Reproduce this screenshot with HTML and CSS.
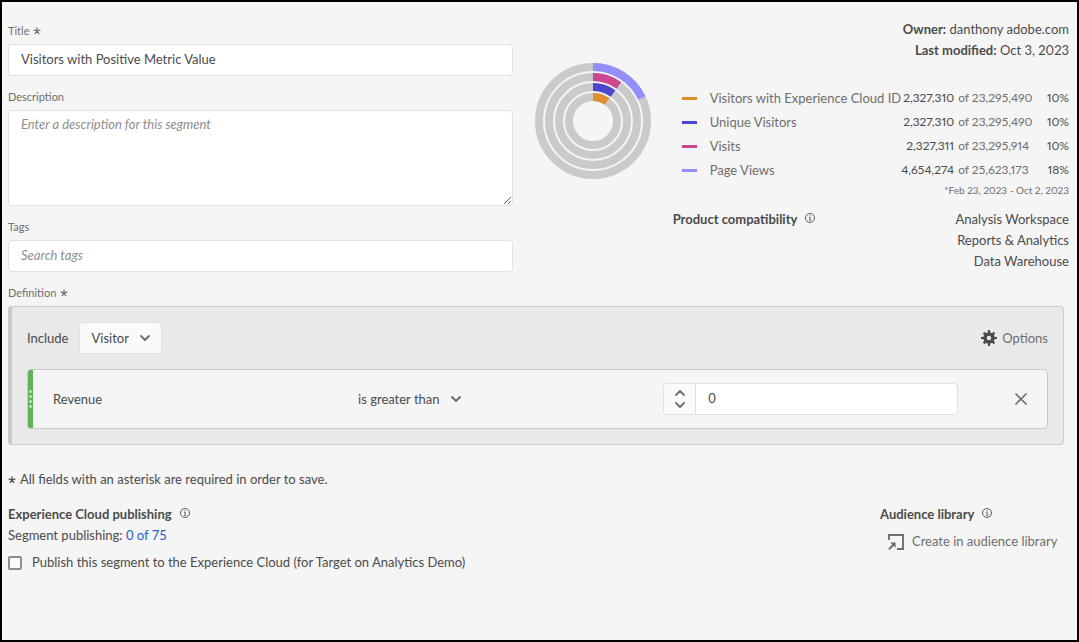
FILE: index.html
```html
<!DOCTYPE html>
<html lang="en">
<head>
<meta charset="utf-8">
<meta name="viewport" content="width=device-width, initial-scale=1">
<title>Segment builder</title>
<link rel="stylesheet" href="styles.css">
</head>
<body>
<svg class="sprite" aria-hidden="true">
  <symbol id="asterisk" viewBox="0 0 8 8"><path d="M4 4V.4M4 4 .6 2.9M4 4l3.4-1.1M4 4 1.9 7M4 4l2.1 3" fill="none" stroke="currentColor" stroke-width="1.3"/></symbol>
  <symbol id="info" viewBox="0 0 10 10"><circle cx="5" cy="5" r="4.5" fill="none" stroke="currentColor" stroke-width=".9"/><path d="M4 4.4h1.2v2.8M3.9 7.3h2.4" fill="none" stroke="currentColor" stroke-width=".8"/><circle cx="5" cy="2.8" r=".65" fill="currentColor"/></symbol>
  <symbol id="chevron" viewBox="0 0 10 6"><path d="M1 1l4 4 4-4" fill="none" stroke="currentColor" stroke-width="1.8" stroke-linecap="round" stroke-linejoin="round"/></symbol>
</svg>
<main class="page">
  <div class="top">
    <form class="details">
      <label class="label" for="title">Title <svg class="asterisk"><use href="#asterisk"/></svg></label>
      <input class="field" id="title" type="text" value="Visitors with Positive Metric Value">
      <label class="label label-next" for="description">Description</label>
      <textarea class="field field-area" id="description" placeholder="Enter a description for this segment"></textarea>
      <label class="label label-next" for="tags">Tags</label>
      <input class="field" id="tags" type="text" placeholder="Search tags">
    </form>
    <section class="summary">
      <div class="meta">
        <div><b>Owner:</b> danthony adobe.com</div>
        <div><b>Last modified:</b> Oct 3, 2023</div>
      </div>
      <div class="stats">
        <svg class="chart" viewBox="0 0 116 116" role="img" aria-label="Share of each metric">
          <g fill="none" stroke="#cacaca" stroke-width="8">
            <circle cx="58" cy="58" r="54"/><circle cx="58" cy="58" r="44"/><circle cx="58" cy="58" r="34"/><circle cx="58" cy="58" r="24"/>
          </g>
          <g fill="none" stroke-width="8" transform="rotate(-90 58 58)">
            <circle cx="58" cy="58" r="54" pathLength="100" stroke="#938ffa" stroke-dasharray="18 82"/>
            <circle cx="58" cy="58" r="44" pathLength="100" stroke="#cb4790" stroke-dasharray="10 90"/>
            <circle cx="58" cy="58" r="34" pathLength="100" stroke="#4c46d1" stroke-dasharray="10 90"/>
            <circle cx="58" cy="58" r="24" pathLength="100" stroke="#de8d2f" stroke-dasharray="10 90"/>
          </g>
        </svg>
        <div class="figures">
          <table class="legend">
            <tr><td class="key"><span class="swatch orange"></span></td><th scope="row">Visitors with Experience Cloud ID</th><td class="value">2,327,310</td><td class="total">of 23,295,490</td><td class="percent">10%</td></tr>
            <tr><td class="key"><span class="swatch indigo"></span></td><th scope="row">Unique Visitors</th><td class="value">2,327,310</td><td class="total">of 23,295,490</td><td class="percent">10%</td></tr>
            <tr><td class="key"><span class="swatch magenta"></span></td><th scope="row">Visits</th><td class="value">2,327,311</td><td class="total">of 23,295,914</td><td class="percent">10%</td></tr>
            <tr><td class="key"><span class="swatch violet"></span></td><th scope="row">Page Views</th><td class="value">4,654,274</td><td class="total">of 25,623,173</td><td class="percent">18%</td></tr>
          </table>
          <p class="range">*Feb 23, 2023 - Oct 2, 2023</p>
          <div class="products">
            <h2 class="heading">Product compatibility <svg class="info"><use href="#info"/></svg></h2>
            <ul class="product-list"><li>Analysis Workspace</li><li>Reports &amp; Analytics</li><li>Data Warehouse</li></ul>
          </div>
        </div>
      </div>
    </section>
  </div>

  <div class="label label-next">Definition <svg class="asterisk"><use href="#asterisk"/></svg></div>
  <section class="definition">
    <div class="scope">
      <label for="scope">Include</label>
      <span class="picker picker-boxed"><select id="scope"><option>Visitor</option></select><svg class="chevron"><use href="#chevron"/></svg></span>
      <button class="action options" type="button">
        <svg class="icon" viewBox="0 0 16 16"><circle cx="8" cy="8" r="4" fill="none" stroke="currentColor" stroke-width="3.6"/><path d="M8 0v3M8 13v3M0 8h3M13 8h3M2.6 2.6l2 2M11.4 11.4l2 2M2.6 13.4l2-2M11.4 4.6l2-2" stroke="currentColor" stroke-width="2.2"/></svg>
        Options</button>
    </div>
    <div class="rule">
      <span class="grip"><i></i><i></i><i></i><i></i></span>
      <label for="amount">Revenue</label>
      <span class="picker"><select aria-label="Operator"><option>is greater than</option></select><svg class="chevron"><use href="#chevron"/></svg></span>
      <div class="stepper">
        <div class="steps">
          <button type="button" aria-label="Increase"><svg class="step up"><use href="#chevron"/></svg></button>
          <button type="button" aria-label="Decrease"><svg class="step"><use href="#chevron"/></svg></button>
        </div>
        <input id="amount" type="number" value="0">
      </div>
      <button class="remove" type="button" aria-label="Remove rule"><svg viewBox="0 0 12 12"><path d="M1 1l10 10M11 1L1 11" stroke="currentColor" stroke-width="1.7" stroke-linecap="round"/></svg></button>
    </div>
  </section>

  <p class="note"><svg class="asterisk"><use href="#asterisk"/></svg> All fields with an asterisk are required in order to save.</p>

  <div class="bottom">
    <section>
      <h2 class="heading">Experience Cloud publishing <svg class="info"><use href="#info"/></svg></h2>
      <p class="quota">Segment publishing: <a href="#quota">0 of 75</a></p>
      <label class="publish"><input type="checkbox"> Publish this segment to the Experience Cloud (for Target on Analytics Demo)</label>
    </section>
    <section class="audience">
      <h2 class="heading">Audience library <svg class="info"><use href="#info"/></svg></h2>
      <button class="action create" type="button">
        <svg class="icon" viewBox="0 0 16 16"><path d="M1 6V1h14v14H9" fill="none" stroke="currentColor" stroke-width="1.9"/><path d="M2.2 8.6h5.4v5.2L5.8 12 1.4 16 .2 14.8 4.2 10.5z" fill="currentColor"/></svg>
        Create in audience library</button>
    </section>
  </div>
</main>
</body>
</html>
```
FILE: styles.css
```css
* { box-sizing: border-box; }

body {
  margin: 0;
  background: #f5f5f5;
  color: #4b4b4b;
  font: 13px/21px Lato, "Noto Sans", sans-serif;
}

input, textarea, select, button { font: inherit; color: inherit; }
button { padding: 0; border: 0; background: none; }
h2, p, ul { margin: 0; padding: 0; }

.sprite { position: absolute; width: 0; height: 0; }

.page {
  min-height: 100vh;
  border: 2px solid #000;
  padding: 17px 8px 24px 6px;
}

.top {
  display: grid;
  grid-template-columns: 17fr 18fr;
  gap: 22px;
}

.details { display: flex; flex-direction: column; padding-top: 1px; }

.label {
  display: flex;
  align-items: center;
  gap: 4px;
  padding-bottom: 2px;
  font-size: 11px;
  line-height: 22px;
  color: #6e6e6e;
}
.label-next { margin-top: 10px; }
.asterisk { width: 8px; height: 8px; }

.field {
  width: 100%;
  height: 32px;
  padding: 0 12px 2px;
  border: 1px solid #e1e1e1;
  border-radius: 4px;
  background: #fff;
}
.field-area { display: block; height: 96px; padding: 3px 12px; }
.field::placeholder { color: #8e8e8e; font-style: italic; opacity: 1; }

.meta { text-align: right; font-variant-numeric: proportional-nums; }
.stats { display: flex; gap: 22px; }
.chart { flex: none; width: 116px; height: 116px; margin-top: 2px; }
.figures { flex: 1; min-width: 0; padding-top: 25px; }

.legend {
  width: 100%;
  border-collapse: collapse;
  line-height: 24px;
  white-space: nowrap;
  font-variant-numeric: proportional-nums;
}
.legend td, .legend th { padding: 0; font-weight: 400; text-align: left; }
.legend th { color: #6e6e6e; }
.legend .key { width: 37px; min-width: 37px; padding-left: 9px; }
.swatch { display: block; width: 15px; height: 3px; }
.orange { background: #de8d2f; }
.indigo { background: #4c46d1; }
.magenta { background: #cb4790; }
.violet { background: #938ffa; }
.legend .value, .legend .total, .legend .percent { font-size: 12px; }
.legend .value { text-align: right; }
.legend .total { width: 84px; padding-left: 4px; color: #6e6e6e; }
.legend .percent { width: 33px; text-align: right; }

.range { font-size: 10px; line-height: 16px; text-align: right; color: #6e6e6e; font-variant-numeric: proportional-nums; }
.products { display: flex; justify-content: space-between; margin-top: 11px; }
.product-list { list-style: none; text-align: right; }

.heading { display: flex; gap: 8px; font-size: 13px; line-height: 21px; }
.info { width: 10px; height: 10px; margin-top: 4px; }

.definition {
  margin-right: 5px;
  padding: 15px;
  border: 1px solid #cacaca;
  border-left-width: 4px;
  border-radius: 4px;
  background: #e9e9e9;
}
.scope { display: flex; align-items: center; gap: 11px; }

.picker { display: inline-flex; position: relative; align-items: center; justify-self: start; }
.picker select {
  height: 32px;
  padding: 0 21px 0 0;
  border: 0;
  background: none;
  appearance: none;
}
.picker .chevron { position: absolute; right: 0; pointer-events: none; }
.picker-boxed select {
  padding: 0 32px 0 11px;
  border: 1px solid #e1e1e1;
  border-radius: 4px;
  background: #fafafa;
}
.picker-boxed .chevron { right: 12px; }
.chevron { width: 10px; height: 6px; color: #6e6e6e; }

.action { display: inline-flex; align-items: center; }
.icon { width: 16px; height: 16px; }
.options { gap: 5px; margin-left: auto; color: #6e6e6e; }
.options .icon { color: #4b4b4b; }

.rule {
  display: grid;
  grid-template-columns: 31fr 31fr 30fr 9fr;
  align-items: center;
  position: relative;
  height: 60px;
  margin-top: 15px;
  padding-left: 25px;
  border: 1px solid #cacaca;
  border-radius: 4px;
  background: #f5f5f5;
}
.grip {
  display: flex;
  flex-direction: column;
  align-items: center;
  justify-content: center;
  gap: 2px;
  position: absolute;
  inset: 0 auto 0 0;
  width: 5px;
  border-radius: 2px 0 0 2px;
  background: #62b25a;
}
.grip i { width: 3px; height: 3px; border-radius: 50%; background: #c4e4c0; }

.stepper {
  display: flex;
  height: 32px;
  border: 1px solid #e1e1e1;
  border-radius: 4px;
  background: #fff;
  overflow: hidden;
}
.steps {
  display: flex;
  flex-direction: column;
  flex: none;
  width: 32px;
  padding: 3px 0;
  border-right: 1px solid #e1e1e1;
  background: #fafafa;
}
.steps button { display: flex; flex: 1; align-items: center; justify-content: center; }
.step { width: 10px; height: 6px; color: #6e6e6e; }
.up { transform: rotate(180deg); }
.stepper input { flex: 1; min-width: 0; padding: 0 12px 2px; border: 0; background: none; appearance: textfield; }
.stepper input::-webkit-inner-spin-button { appearance: none; margin: 0; }

.remove { display: flex; justify-self: end; margin-right: 20px; color: #6e6e6e; }
.remove svg { width: 12px; height: 12px; }

.note { display: flex; align-items: center; gap: 4px; margin-top: 24px; }
.bottom { display: flex; justify-content: space-between; margin-top: 14px; }
.quota a { color: #2460cf; text-decoration: none; }
.publish { display: flex; align-items: center; gap: 10px; margin-top: 6px; }
.publish input {
  width: 14px;
  height: 14px;
  margin: 0;
  border: 2px solid #8e8e8e;
  border-radius: 2px;
  background: #fafafa;
  appearance: none;
}
.publish input:checked { background: #6e6e6e; }
.audience { width: 189px; }
.create { gap: 8px; margin: 6px 0 0 8px; color: #6e6e6e; }
```
